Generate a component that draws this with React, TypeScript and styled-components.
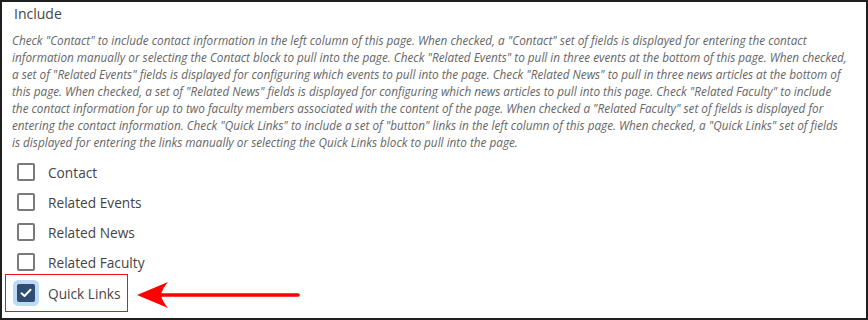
import React from 'react';
import styled, { createGlobalStyle } from 'styled-components';

const GlobalStyle = createGlobalStyle`
    body {
        margin: 0;
        background: #fff;
        font-family: "Open Sans", "Liberation Sans", sans-serif;
    }
`

const Frame = styled.div`
    position: relative;
    width: 868px;
    height: 320px;
    box-sizing: border-box;
    border: 2px solid #1e1e1e;
    padding: 2px 10px 0 10px;
    overflow: hidden;
`

const Heading = styled.div`
    font-size: 14px;
    line-height: 20px;
    color: #444;
    margin-left: 2px;
`

const Help = styled.div`
    margin-top: 8px;
    font-size: 11.75px;
    font-style: italic;
    line-height: 17px;
    color: #666;
`

const HelpLine = styled.span`
    display: block;
    white-space: nowrap;
`

const Options = styled.div`
    display: flex;
    flex-direction: column;
    align-items: flex-start;
    margin-top: 6px;
`

const Option = styled.label<{ $highlight?: boolean }>`
    display: flex;
    align-items: center;
    box-sizing: border-box;
    height: ${p => (p.$highlight ? '38px' : '30px')};
    margin: ${p => (p.$highlight ? '-3px 0 0 -7px' : '0')};
    padding: ${p => (p.$highlight ? '0 6px 0 11px' : '0 0 0 5px')};
    border: ${p => (p.$highlight ? '1px solid #e8141b' : 'none')};
    cursor: pointer;
`

const Box = styled.span<{ $checked?: boolean }>`
    display: flex;
    align-items: center;
    justify-content: center;
    width: 18px;
    height: 18px;
    box-sizing: border-box;
    border: 2px solid ${p => (p.$checked ? '#2f4d72' : '#7a7a7a')};
    border-radius: 2px;
    background: ${p => (p.$checked ? '#2f4d72' : '#fff')};
    box-shadow: ${p => (p.$checked ? '0 0 0 4px #bcd9f5' : 'none')};
`

const Text = styled.span`
    margin-left: 13px;
    font-size: 13.7px;
    color: #444;
`

const Arrow = styled.svg`
    position: absolute;
    left: 130px;
    top: 275px;
`

const help = [
    'Check "Contact" to include contact information in the left column of this page. When checked, a "Contact" set of fields is displayed for entering the contact',
    'information manually or selecting the Contact block to pull into the page. Check "Related Events" to pull in three events at the bottom of this page. When checked,',
    'a set of "Related Events" fields is displayed for configuring which events to pull into the page. Check "Related News" to pull in three news articles at the bottom of',
    'this page. When checked, a set of "Related News" fields is displayed for configuring which news articles to pull into this page. Check "Related Faculty" to include',
    'the contact information for up to two faculty members associated with the content of the page. When checked a "Related Faculty" set of fields is displayed for',
    'entering the contact information. Check "Quick Links" to include a set of "button" links in the left column of this page. When checked, a "Quick Links" set of fields',
    'is displayed for entering the links manually or selecting the Quick Links block to pull into the page.',
]

const options = [
    { name: 'Contact', checked: false },
    { name: 'Related Events', checked: false },
    { name: 'Related News', checked: false },
    { name: 'Related Faculty', checked: false },
    { name: 'Quick Links', checked: true },
]

export default function App() {
    return (
        <>
            <GlobalStyle />
            <Frame>
                <Heading>Include</Heading>
                <Help>
                    {help.map((line, i) => (
                        <HelpLine key={i}>{line}</HelpLine>
                    ))}
                </Help>
                <Options>
                    {options.map(o => (
                        <Option key={o.name} $highlight={o.checked}>
                            <Box $checked={o.checked}>
                                {o.checked && (
                                    <svg width="12" height="10" viewBox="0 0 12 10">
                                        <polyline points="1.5,5.2 4.5,8 10.5,1.8" fill="none" stroke="#fff" strokeWidth="2" strokeLinecap="round" strokeLinejoin="round" />
                                    </svg>
                                )}
                            </Box>
                            <Text>{o.name}</Text>
                        </Option>
                    ))}
                </Options>
                <Arrow width="175" height="34" viewBox="0 0 175 34">
                    <line x1="26" y1="18" x2="166" y2="18" stroke="#f00" strokeWidth="3.6" strokeLinecap="round" />
                    <path d="M5 18 L36 5 Q30 12 29 18 Q30 24 36 31 Z" fill="#f00" />
                </Arrow>
            </Frame>
        </>
    )
}
